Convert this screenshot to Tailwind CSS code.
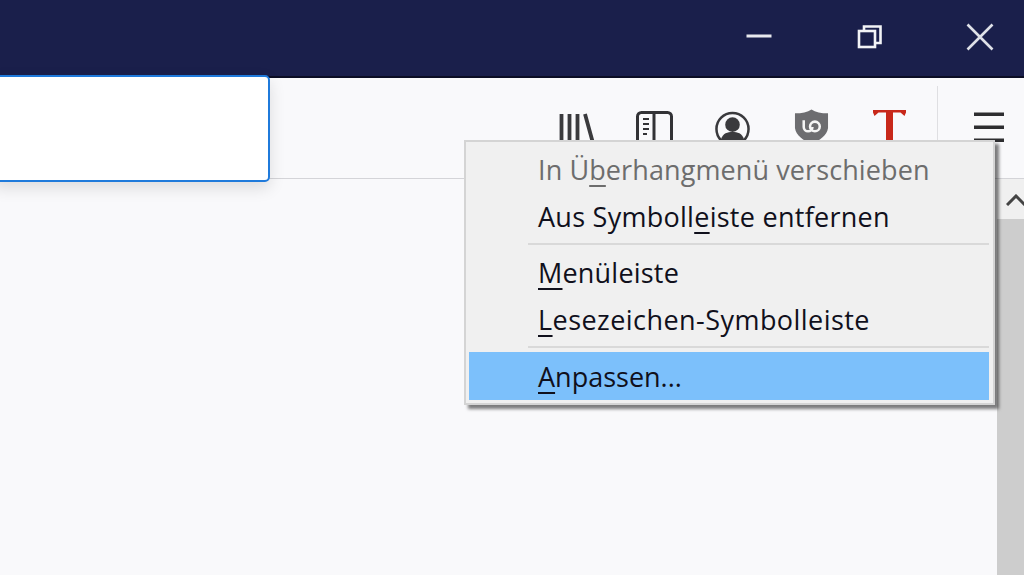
<!DOCTYPE html>
<html lang="de">
<head>
<meta charset="utf-8">
<script src="https://cdn.jsdelivr.net/npm/@tailwindcss/browser@4"></script>
</head>
<body class="w-[1024px] h-[575px] overflow-hidden bg-[#f9f9fb] font-['Open_Sans','Liberation_Sans',sans-serif]">
<div class="relative w-[1024px] h-[575px] flex flex-col overflow-hidden">
  <!-- title bar -->
  <div class="h-[78px] shrink-0 bg-[#1a1f4b] border-b-2 border-[#0b0d24] flex justify-end items-center pr-[30px] pb-[3px]">
    <svg width="26" height="6" viewBox="0 0 26 6" class="mr-[85px] -mt-[1px]"><rect x="0.500" y="1.500" width="25" height="3" fill="#e8e9ee"/></svg>
    <svg width="26" height="26" viewBox="0 0 26 26" fill="none" stroke="#f2f3f6" stroke-width="2.600" class="mr-[83px]"><rect x="2" y="7" width="16" height="16"/><path d="M7 7V2.500H23.500V19H18"/></svg>
    <svg width="28" height="28" viewBox="0 0 28 28" fill="none" stroke="#dfe1e8" stroke-width="2.600"><path d="M1.500 1.500 26.500 26.500M26.500 1.500 1.500 26.500"/></svg>
  </div>
  <!-- toolbar -->
  <div class="h-[101px] shrink-0 bg-[#f9f9fb] border-b border-[#d4d4d8] flex items-start justify-end pr-[20px] pt-[31px]">
    <div class="flex items-start gap-[44px] pr-[31px] mr-[36px] h-[60px] border-r border-[#dfdfe2] -mt-[23px] pt-[25px]">
      <svg width="36" height="34" viewBox="0 0 36 34" fill="none" stroke="#3a3a3d" stroke-width="3.800"><path d="M2.500 3V34M10.500 3V34M18.500 3V34M26 3 34.500 34"/></svg>
      <svg width="37" height="38" viewBox="0 0 37 38" fill="none" stroke="#333336" stroke-width="3" class="-ml-[3px]"><rect x="1.500" y="1.500" width="34" height="36" rx="4"/><path d="M18 2V38"/><path d="M7 8h6M7 13h6M7 18h6M7 23h4" stroke-width="2"/></svg>
      <svg width="35" height="36" viewBox="0 0 36 36" class="-ml-[2px]"><circle cx="18" cy="18" r="16.500" fill="none" stroke="#3a3a3d" stroke-width="2.600"/><circle cx="18" cy="13.500" r="7.500" fill="#3a3a3d"/><path d="M6 29c2-7 7-8 12-8s10 1 12 8c-3 4-8 6-12 6s-9-2-12-6z" fill="#3a3a3d"/></svg>
      <svg width="35" height="36" viewBox="0 0 36 36" class="-mt-[3px]"><path d="M18 1C22 4 28 5 35 5V20C34 28 26 33 18 36 10 33 2 28 1 20V5C8 5 14 4 18 1Z" fill="#6d6d70"/><path d="M10 12v7a4.500 4.500 0 0 0 9 0" fill="none" stroke="#f5f5f5" stroke-width="2.600"/><circle cx="21.500" cy="18.500" r="5" fill="none" stroke="#f5f5f5" stroke-width="2.600"/></svg>
      <svg width="33" height="36" viewBox="0 0 33 36" class="-mt-[2px]"><path d="M0 1H33V3.500L31.500 7 27.500 3.500H20V36H13V3.500H5.500L1.500 7 0 3.500Z" fill="#c8281a"/></svg>
    </div>
    <svg width="30" height="36" viewBox="0 0 30 36" fill="#2e2e30" class="shrink-0"><rect y="3.500" width="30" height="3.500"/><rect y="16.500" width="30" height="3.500"/><rect y="29.500" width="30" height="3.500"/></svg>
  </div>
  <!-- content with scrollbar -->
  <div class="flex-1 flex justify-end min-h-0">
    <div class="w-[27px] flex flex-col bg-[#cdcdcd]">
      <div class="h-[40px] bg-[#f0f0f0] pt-[15px] pl-[9px] overflow-hidden">
        <svg width="20" height="12" viewBox="0 0 20 12" fill="none" stroke="#444" stroke-width="3" class="max-w-none"><path d="M1 11 10 2 19 11"/></svg>
      </div>
    </div>
  </div>

  <!-- address bar, overlays toolbar -->
  <div class="absolute left-[-8px] top-[75px] w-[278px] h-[107px] bg-white border-2 border-[#1f7adb] rounded-[5px] shadow-[0_6px_16px_rgba(0,0,0,0.12)]"></div>

  <!-- context menu -->
  <div class="absolute left-[464px] top-[140px] w-[531px] h-[265px] bg-[#f0f0f0] border-2 border-[#d4d4d4] shadow-[4px_4px_3px_rgba(0,0,0,0.5)] pt-[5px] pl-[3px] pr-[4px] text-[27px] leading-[45px] text-[#10101c]">
    <div class="h-[47px] pl-[69px] tracking-[0.1px] text-[#6d6d6d]">In Ü<span class="underline underline-offset-[5px] decoration-[2px]">b</span>erhangmenü verschieben</div>
    <div class="h-[47px] pl-[69px] tracking-[0.27px]">Aus Symboll<span class="underline underline-offset-[5px] decoration-[2px]">e</span>iste entfernen</div>
    <div class="h-[9px] ml-[59px] pt-[2px]"><div class="w-full h-[2px] bg-[#d9d9d9]"></div></div>
    <div class="h-[47px] pl-[69px] tracking-[0.2px]"><span class="underline underline-offset-[5px] decoration-[2px]">M</span>enüleiste</div>
    <div class="h-[47px] pl-[69px] tracking-[0.45px]"><span class="underline underline-offset-[5px] decoration-[2px]">L</span>esezeichen-Symbolleiste</div>
    <div class="h-[8px] ml-[59px] pt-[2px]"><div class="w-full h-[2px] bg-[#d9d9d9]"></div></div>
    <div class="h-[48px] pl-[69px] bg-[#7cc0fb] leading-[50px]"><span class="underline underline-offset-[5px] decoration-[2px]">A</span>npassen...</div>
  </div>
</div>
</body>
</html>
